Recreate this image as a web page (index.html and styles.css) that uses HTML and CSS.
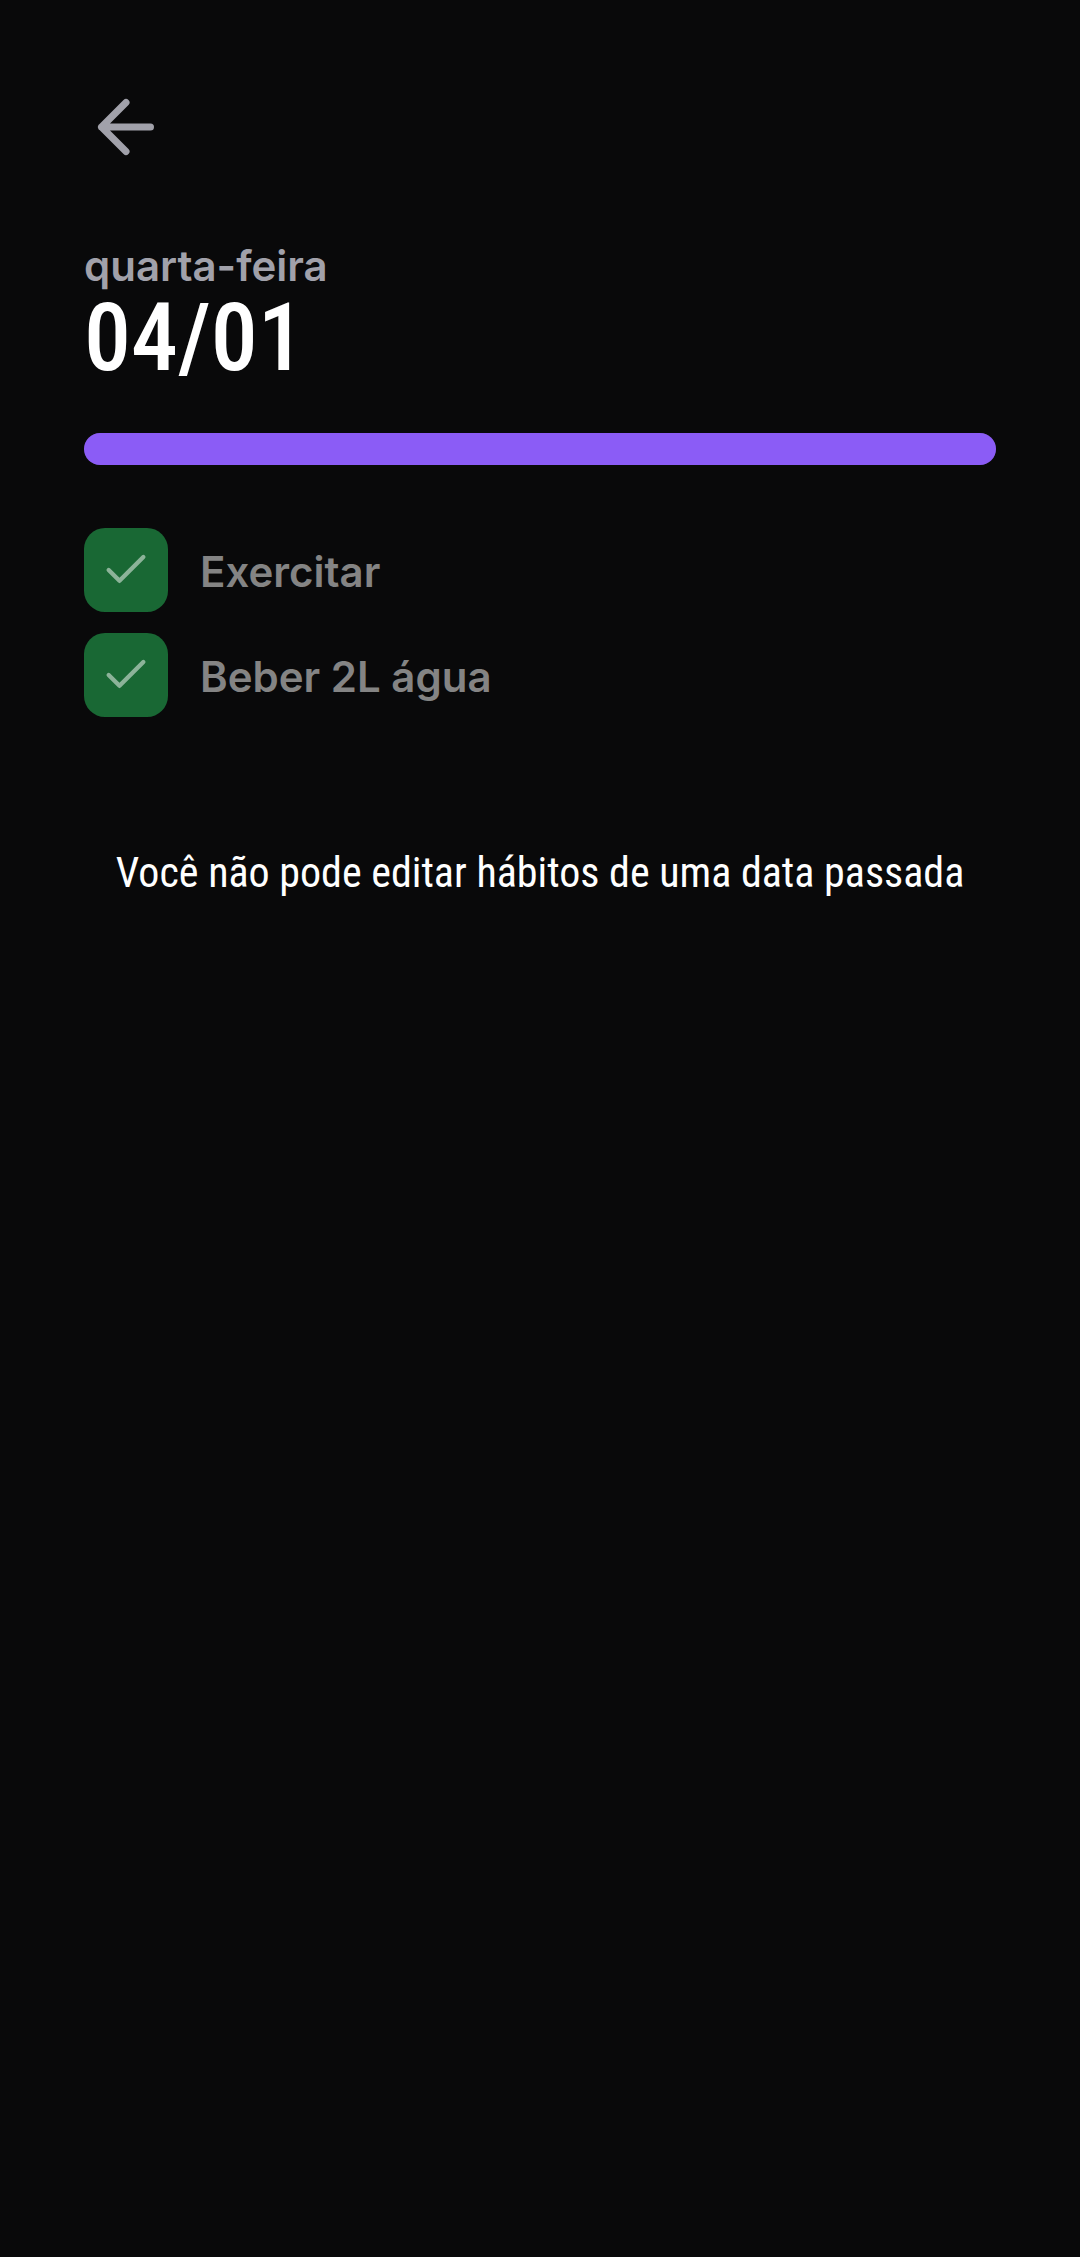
FILE: index.html
```html
<!DOCTYPE html>
<html lang="pt-BR">
<head>
  <meta charset="utf-8">
  <meta name="viewport" content="width=device-width, initial-scale=1">
  <title>Hábitos</title>
  <link rel="stylesheet" href="styles.css">
</head>
<body>
  <main class="screen">
    <button class="back" type="button" aria-label="Voltar">
      <svg class="back-icon" viewBox="0 0 24 24"><path d="M19 12H5M12 19l-7-7 7-7"/></svg>
    </button>
    <header class="heading">
      <p class="weekday">quarta-feira</p>
      <h1 class="date">04/01</h1>
    </header>
    <div class="progress" role="progressbar" aria-label="Progresso" aria-valuemin="0" aria-valuemax="100" aria-valuenow="100">
      <div class="progress-fill" style="width: 100%"></div>
    </div>
    <ul class="habits">
      <li>
        <label class="habit">
          <span class="check">
            <input class="check-input" type="checkbox" checked disabled>
            <svg class="check-icon" viewBox="0 0 24 24"><path d="M20 6L9 17l-5-5"/></svg>
          </span>
          <span class="habit-name">Exercitar</span>
        </label>
      </li>
      <li>
        <label class="habit">
          <span class="check">
            <input class="check-input" type="checkbox" checked disabled>
            <svg class="check-icon" viewBox="0 0 24 24"><path d="M20 6L9 17l-5-5"/></svg>
          </span>
          <span class="habit-name">Beber 2L água</span>
        </label>
      </li>
    </ul>
    <p class="notice">Você não pode editar hábitos de uma data passada</p>
  </main>
</body>
</html>
```
FILE: styles.css
```css
* {
  box-sizing: border-box;
}

body {
  margin: 0;
  background: #09090a;
  color: #fff;
  font-family: "Inter", sans-serif;
  font-size: 42px;
}

.screen {
  display: flex;
  flex-direction: column;
  min-height: 100vh;
  padding: 85px 84px;
}

.back {
  align-self: flex-start;
  padding: 0;
  border: 0;
  background: none;
  color: #a1a1aa;
}

.back-icon,
.check-icon {
  display: block;
  fill: none;
  stroke: currentColor;
  stroke-width: 2;
  stroke-linecap: round;
  stroke-linejoin: round;
}

.back-icon {
  width: 84px;
  height: 84px;
}

.heading {
  margin-top: 65px;
}

.weekday {
  margin: 0;
  color: #a1a1aa;
  font-weight: 600;
  line-height: 64px;
}

.date {
  margin: 0;
  font-family: "Roboto Condensed", "Roboto", sans-serif;
  font-size: 94px;
  font-weight: 500;
  line-height: 80px;
}

.progress {
  height: 32px;
  margin-top: 55px;
  border-radius: 16px;
  background: #27272a;
}

.progress-fill {
  height: 100%;
  border-radius: 16px;
  background: #8b5cf6;
}

.habits {
  display: flex;
  flex-direction: column;
  gap: 21px;
  margin: 63px 0 0;
  padding: 0;
  list-style: none;
}

.habit {
  display: flex;
  align-items: center;
  gap: 32px;
}

.check {
  display: grid;
  place-items: center;
}

.check-input,
.check-icon {
  grid-area: 1 / 1;
}

.check-input {
  width: 84px;
  height: 84px;
  margin: 0;
  border-radius: 21px;
  background: #27272a;
  appearance: none;
}

.check-input:checked {
  background: #196834;
}

.check-icon {
  width: 52px;
  height: 52px;
  color: #8cb399;
}

.habit-name {
  padding-top: 4px;
  color: #848484;
  font-weight: 600;
  line-height: 64px;
}

.notice {
  margin: 124px 0 0;
  font-family: "Roboto Condensed", "Roboto", sans-serif;
  line-height: 64px;
  text-align: center;
}
```
